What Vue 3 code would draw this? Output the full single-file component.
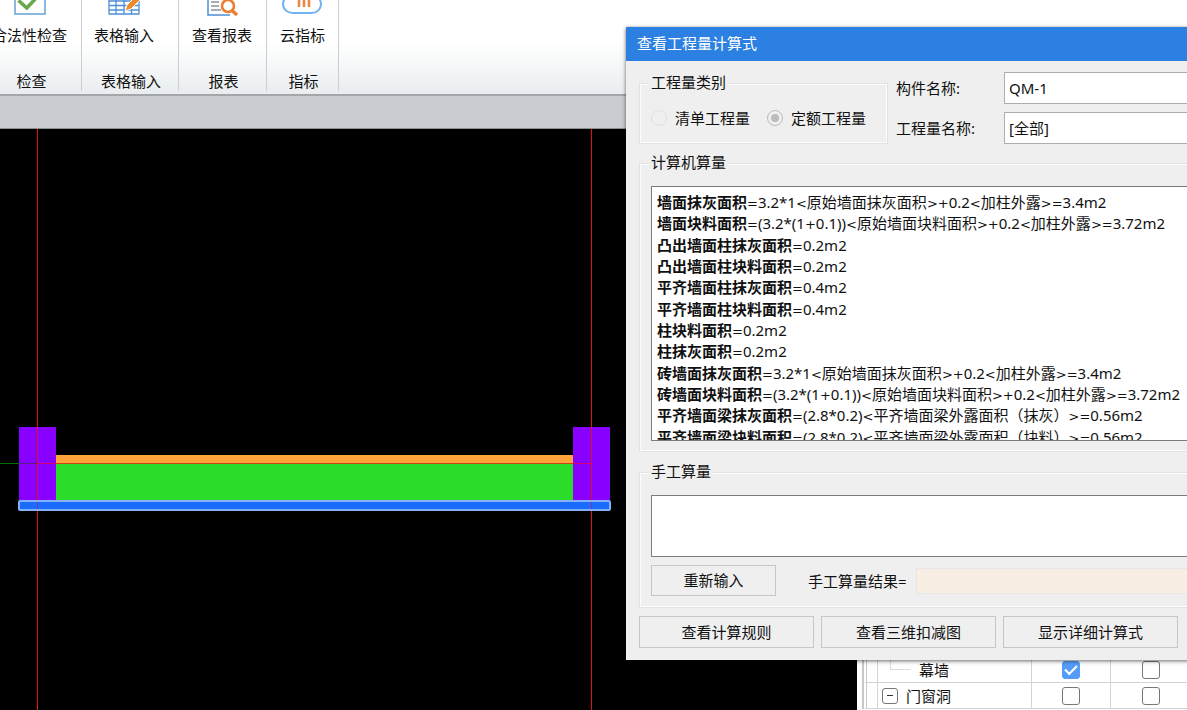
<script setup>
import { ref } from 'vue'

const formulas = [
  ['墙面抹灰面积', '=3.2*1<原始墙面抹灰面积>+0.2<加柱外露>=3.4m2'],
  ['墙面块料面积', '=(3.2*(1+0.1))<原始墙面块料面积>+0.2<加柱外露>=3.72m2'],
  ['凸出墙面柱抹灰面积', '=0.2m2'],
  ['凸出墙面柱块料面积', '=0.2m2'],
  ['平齐墙面柱抹灰面积', '=0.4m2'],
  ['平齐墙面柱块料面积', '=0.4m2'],
  ['柱块料面积', '=0.2m2'],
  ['柱抹灰面积', '=0.2m2'],
  ['砖墙面抹灰面积', '=3.2*1<原始墙面抹灰面积>+0.2<加柱外露>=3.4m2'],
  ['砖墙面块料面积', '=(3.2*(1+0.1))<原始墙面块料面积>+0.2<加柱外露>=3.72m2'],
  ['平齐墙面梁抹灰面积', '=(2.8*0.2)<平齐墙面梁外露面积（抹灰）>=0.56m2'],
  ['平齐墙面梁块料面积', '=(2.8*0.2)<平齐墙面梁外露面积（块料）>=0.56m2'],
].map(([name, text]) => ({
  name,
  parts: text.split(/([=+<>]+)/).filter(Boolean).map((t) => ({ t, op: /^[=+<>]/.test(t) })),
}))
const component = ref('QM-1')
const quantity = ref('[全部]')
const manual = ref('')
const result = ref('')
const kind = ref('quota')
const layers = ref([
  { name: '幕墙', parent: false, a: true, b: false },
  { name: '门窗洞', parent: true, a: false, b: false },
])
</script>

<template>
  <div class="app">
    <header class="ribbon">
      <section class="group check">
        <button class="tool" type="button">
          <svg width="32" height="32" viewBox="0 0 32 32" fill="none">
            <rect x="2" y="1" width="30" height="29" fill="#fff" stroke="#5b9bd5" stroke-width="1.4" />
            <path d="M5.5 16.500l8.300 7.500L26 11" stroke="#69a84c" stroke-width="3.600" />
          </svg>
          <span>合法性检查</span>
        </button>
        <h2>检查</h2>
      </section>
      <section class="group table-input">
        <button class="tool" type="button">
          <svg width="32" height="32" viewBox="0 0 32 32" fill="none">
            <path d="M1 1h30v29H1zM8 1v29M16 1v29M23.500 1v29M1 7h30M1 12h30M1 17h30M1 21.500h30M1 26h30" stroke="#4d8fd6" stroke-width="1.300" />
            <path d="M17 27l2-6L31 9l4 4-12 12z" fill="#ed8b2b" stroke="#fff" stroke-width="1" />
          </svg>
          <span>表格输入</span>
        </button>
        <h2>表格输入</h2>
      </section>
      <section class="group report">
        <button class="tool" type="button">
          <svg width="32" height="32" viewBox="0 0 32 32" fill="none">
            <path d="M25 10V1H2v30h22" stroke="#4d8fd6" stroke-width="1.500" />
            <path d="M5 14h11M5 18h8M5 22h8M5 26h10" stroke="#8b9299" stroke-width="1.300" />
            <circle cx="22" cy="22" r="6" fill="#fff" stroke="#ed7d31" stroke-width="2.600" />
            <path d="M26.500 27l4.500 4" stroke="#ed7d31" stroke-width="3.400" />
          </svg>
          <span>查看报表</span>
        </button>
        <h2>报表</h2>
      </section>
      <section class="group cloud">
        <button class="tool" type="button">
          <svg width="40" height="32" viewBox="0 0 40 32" fill="none">
            <path d="M11 29h19c5 0 9-4 9-9s-4-8-8-8C29 5 24 2 19 3c-5 0-8 4-9 9-5 0-9 3-9 8s4 9 10 9z" fill="#fff" stroke="#70b2f3" stroke-width="2" />
            <path d="M17 23V10M22 23V10M27 23V10" stroke="#e88748" stroke-width="2.600" />
          </svg>
          <span>云指标</span>
        </button>
        <h2>指标</h2>
      </section>
    </header>
    <div class="strip"></div>

    <main class="workspace">
      <div class="canvas">
        <svg width="857" height="581" viewBox="0 129 857 581">
          <rect x="56" y="455" width="517" height="9" fill="#ffa238" />
          <rect x="56" y="464" width="517" height="36" fill="#2bdc2b" />
          <rect x="19" y="427" width="37" height="73" fill="#8800ff" />
          <rect x="573" y="427" width="37" height="73" fill="#8800ff" />
          <rect x="0" y="463" width="19" height="1" fill="#007000" />
          <rect x="19" y="463" width="18" height="1" fill="#5a2080" />
          <rect x="37" y="463" width="19" height="1" fill="#d8006c" />
          <rect x="573" y="463" width="18" height="1" fill="#d8006c" />
          <rect x="56" y="463" width="517" height="1" fill="#cc4410" />
          <rect x="37" y="129" width="1" height="581" fill="#e01216" />
          <rect x="591" y="129" width="1" height="581" fill="#e01216" />
          <rect x="19" y="501" width="591" height="9" rx="1" fill="#1b6bff" stroke="#84b0f5" stroke-width="2" />
          <rect x="37" y="502" width="1" height="7" fill="#7c3a9c" />
          <rect x="591" y="502" width="1" height="7" fill="#7c3a9c" />
        </svg>
      </div>
      <aside class="panel">
        <table>
          <tbody>
            <tr v-for="(layer, i) in layers" :key="layer.name">
              <td class="edge"></td>
              <td class="name">
                <div class="node" :class="{ child: !layer.parent }">
                  <button v-if="layer.parent" class="toggle" type="button" aria-label="折叠"></button>
                  <i v-else class="branch"></i>
                  <span>{{ layer.name }}</span>
                </div>
              </td>
              <td class="tick"><input :id="'a' + i" v-model="layer.a" type="checkbox" :aria-label="layer.name" /></td>
              <td class="tick last"><input :id="'b' + i" v-model="layer.b" type="checkbox" :aria-label="layer.name" /></td>
            </tr>
          </tbody>
        </table>
      </aside>
    </main>

    <div class="dialog" role="dialog" aria-labelledby="dialog-title">
      <h1 id="dialog-title">查看工程量计算式</h1>
      <div class="body">
        <div class="top">
          <fieldset class="kinds">
            <legend>工程量类别</legend>
            <div class="radios">
              <label><input v-model="kind" type="radio" name="kind" value="list" disabled />清单工程量</label>
              <label><input v-model="kind" type="radio" name="kind" value="quota" disabled />定额工程量</label>
            </div>
          </fieldset>
          <div class="fields">
            <label for="component">构件名称:</label>
            <select id="component" v-model="component"><option>QM-1</option></select>
            <label for="quantity">工程量名称:</label>
            <select id="quantity" v-model="quantity"><option>[全部]</option></select>
          </div>
        </div>

        <fieldset class="computed">
          <legend>计算机算量</legend>
          <div class="viewer">
            <ul>
              <li v-for="row in formulas" :key="row.name"><b>{{ row.name }}</b><span v-for="(p, i) in row.parts" :key="i" :class="{ op: p.op }">{{ p.t }}</span></li>
            </ul>
          </div>
        </fieldset>

        <fieldset class="manual">
          <legend>手工算量</legend>
          <textarea v-model="manual" aria-label="手工算量"></textarea>
          <div class="result">
            <button class="btn" type="button">重新输入</button>
            <label for="result">手工算量结果=</label>
            <input id="result" v-model="result" type="text" readonly />
          </div>
        </fieldset>

        <footer>
          <button class="btn" type="button">查看计算规则</button>
          <button class="btn" type="button">查看三维扣减图</button>
          <button class="btn" type="button">显示详细计算式</button>
        </footer>
      </div>
    </div>
  </div>
</template>

<style>
body {
  margin: 0;
}
</style>

<style scoped>
.app,
.app * {
  box-sizing: border-box;
}
.app {
  position: relative;
  display: flex;
  flex-direction: column;
  min-height: 100vh;
  overflow: hidden;
  background: #fff;
  color: #111;
  font: 15px/20px "Noto Sans", "Noto Sans CJK SC", sans-serif;
}
button,
input,
select,
textarea {
  margin: 0;
  color: inherit;
  font: inherit;
}
h1,
h2,
ul {
  margin: 0;
  padding: 0;
  font-size: 15px;
  font-weight: 400;
}

.ribbon {
  display: flex;
  height: 96px;
  overflow: hidden;
  border-bottom: 2px solid #a3a7ab;
  background: linear-gradient(#fff 45%, #e9edef);
}
.group {
  display: flex;
  flex-direction: column;
  align-items: center;
  height: 91px;
  border-right: 1px solid #cbced1;
  white-space: nowrap;
}
.check {
  width: 104px;
  margin-left: -22px;
}
.table-input {
  width: 97px;
}
.report {
  width: 88px;
}
.cloud {
  width: 72px;
}
.tool {
  display: flex;
  flex-direction: column;
  align-items: center;
  gap: 9px;
  margin-top: -16px;
  padding: 0;
  border: 0;
  background: none;
}
.table-input .tool {
  padding-right: 12px;
}
.report .tool {
  padding-right: 1px;
}
.tool svg {
  display: block;
  overflow: visible;
}
.group h2 {
  margin-top: 26px;
}
.check h2 {
  padding-left: 4px;
}
.table-input h2,
.report h2,
.cloud h2 {
  padding-left: 2px;
}
.strip {
  height: 33px;
  border-bottom: 1px solid #8d9093;
  background: #c9ccd1;
}

.workspace {
  display: flex;
  flex: 1;
}
.canvas {
  flex: 1;
  min-width: 0;
  overflow: hidden;
  background: #000;
}
.canvas svg {
  display: block;
}
.panel {
  display: flex;
  flex-direction: column;
  justify-content: flex-end;
  width: 330px;
  padding: 0 0 1px 5px;
  background: #fff;
}
table {
  width: 100%;
  border-left: 1px solid #c8c8c8;
  border-spacing: 0;
  table-layout: fixed;
}
td {
  height: 26px;
  padding: 0;
  border-right: 1px solid #d4d4d4;
  border-bottom: 1px solid #d4d4d4;
}
td.edge {
  width: 15px;
  border-left: 4px double #c8c8c8;
}
td.tick {
  width: 79px;
  padding-bottom: 1px;
  text-align: center;
}
td.last {
  width: 76px;
  padding-left: 3px;
  border-right: 0;
}
.node {
  display: flex;
  align-items: center;
  gap: 8px;
  height: 24px;
  padding-left: 4px;
}
.node.child {
  padding-left: 12px;
}
.branch {
  align-self: flex-start;
  width: 21px;
  height: 12px;
  border-bottom: 1px solid #dcdcdc;
  border-left: 1px solid #dcdcdc;
}
.toggle {
  display: grid;
  place-items: center;
  width: 16px;
  height: 16px;
  padding: 0;
  border: 1px solid #777;
  border-radius: 3px;
  background: #fff;
}
.toggle::before {
  width: 6px;
  height: 1px;
  background: #333;
  content: "";
}
.tick input {
  display: inline-grid;
  place-items: center;
  width: 18px;
  height: 18px;
  border: 1px solid #777;
  border-radius: 3px;
  background: #fff;
  vertical-align: middle;
  appearance: none;
}
.tick input:checked {
  border-color: #559cf8;
  background: #559cf8;
}
.tick input:checked::before {
  width: 10px;
  height: 5px;
  margin-bottom: 3px;
  border-bottom: 2px solid #fff;
  border-left: 2px solid #fff;
  transform: rotate(-45deg);
  content: "";
}

.dialog {
  position: absolute;
  top: 27px;
  right: -40px;
  width: 601px;
  background: #efefef;
  box-shadow: 0 1px 4px rgba(0, 0, 0, 0.6);
}
h1 {
  height: 34px;
  padding-left: 11px;
  background: #2c80e2;
  color: #fff;
  line-height: 32px;
}
.body {
  padding: 11px 13px 12px;
}
.top {
  display: flex;
  align-items: flex-end;
  gap: 8px;
}
fieldset {
  min-width: 0;
  margin: 0;
  border: 1px solid #e2e2e2;
  box-shadow: inset 1px 1px #fcfcfc, inset -1px -1px #fcfcfc;
}
legend {
  margin-left: -2px;
  padding: 0 2px 2px;
  background: #efefef;
  line-height: 18px;
}
.kinds {
  flex: none;
  width: 249px;
  padding: 15px 11px;
}
.radios {
  display: flex;
  gap: 17px;
}
.radios label {
  display: flex;
  align-items: center;
  gap: 8px;
  white-space: nowrap;
}
.radios input {
  display: grid;
  flex: none;
  place-items: center;
  width: 16px;
  height: 16px;
  border: 1px solid #e0e0e0;
  border-radius: 50%;
  appearance: none;
}
.radios input:checked {
  border-color: #bcbcbc;
}
.radios input:checked::before {
  width: 8px;
  height: 8px;
  border-radius: 50%;
  background: #bcbcbc;
  content: "";
}
.fields {
  display: grid;
  flex: 1;
  grid-template-columns: 108px 1fr;
  gap: 8px 0;
  align-items: center;
}
select {
  width: 100%;
  height: 32px;
  padding: 0 4px;
  border: 1px solid #adadad;
  border-radius: 0;
  background: #fff;
  appearance: none;
}
.computed {
  margin-top: 9px;
  padding: 13px 11px 10px;
}
.viewer {
  height: 255px;
  overflow: hidden;
  padding: 5px;
  border: 1px solid #7c7c7c;
  background: #fff;
}
ul {
  display: grid;
  grid-template-rows: repeat(12, 1fr);
  height: 256px;
  list-style: none;
  white-space: nowrap;
}
.op {
  font-family: "DejaVu Sans", sans-serif;
  font-size: 13px;
  line-height: 1px;
}
.manual {
  margin-top: 10px;
  padding: 13px 11px 11px;
}
textarea {
  display: block;
  width: 100%;
  height: 62px;
  border: 1px solid #7c7c7c;
  border-radius: 0;
  background: #fff;
  resize: none;
}
.result {
  display: flex;
  align-items: center;
  margin-top: 8px;
}
.result .btn {
  width: 125px;
  height: 31px;
  margin-right: 32px;
}
.result input {
  flex: 1;
  height: 26px;
  margin-left: 9px;
  border: 1px solid #e6e6e6;
  background: #f9eee4;
}
.btn {
  padding: 0 0 1px;
  border: 1px solid #c6c6c6;
  border-radius: 0;
  background: #efefef;
}
footer {
  display: flex;
  gap: 7px;
  margin-top: 8px;
}
footer .btn {
  width: 175px;
  height: 32px;
}
</style>
